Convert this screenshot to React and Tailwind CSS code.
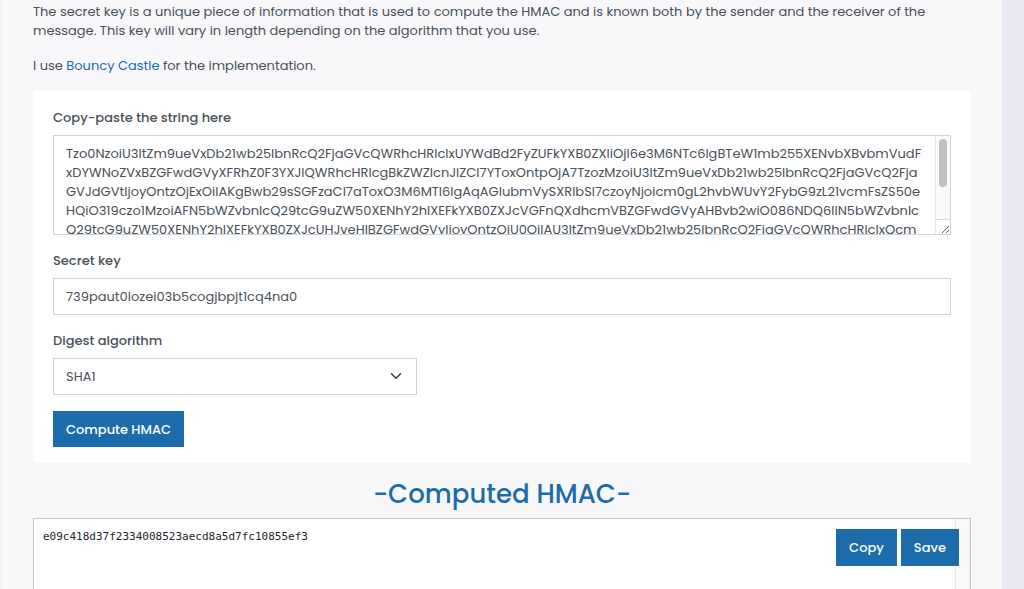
import { useState } from "react";

const MESSAGE = [
  "Tzo0NzoiU3ltZm9ueVxDb21wb25lbnRcQ2FjaGVcQWRhcHRlclxUYWdBd2FyZUFkYXB0ZXIiOjI6e3M6NTc6IgBTeW1mb255XENvbXBvbmVudF",
  "xDYWNoZVxBZGFwdGVyXFRhZ0F3YXJlQWRhcHRlcgBkZWZlcnJlZCI7YToxOntpOjA7TzozMzoiU3ltZm9ueVxDb21wb25lbnRcQ2FjaGVcQ2Fja",
  "GVJdGVtIjoyOntzOjExOiIAKgBwb29sSGFzaCI7aToxO3M6MTI6IgAqAGlubmVySXRlbSI7czoyNjoicm0gL2hvbWUvY2FybG9zL21vcmFsZS50e",
  "HQiO319czo1MzoiAFN5bWZvbnlcQ29tcG9uZW50XENhY2hlXEFkYXB0ZXJcVGFnQXdhcmVBZGFwdGVyAHBvb2wiO086NDQ6IlN5bWZvbnlc",
  "Q29tcG9uZW50XENhY2hlXEFkYXB0ZXJcUHJveHlBZGFwdGVyIjoyOntzOjU0OiIAU3ltZm9ueVxDb21wb25lbnRcQ2FjaGVcQWRhcHRlclxQcm",
].join("\n");

const BUTTON = "bg-[#1c6cab] px-[13px] text-[13px] font-medium text-white";
const LABEL = "mb-2 block text-[13px] leading-[19px] font-medium";
const FIELD = "block border border-[#ced4da] bg-white px-3 text-[13px] leading-[19px] text-[#495057]";

export default function App() {
  const [message, setMessage] = useState(MESSAGE);
  const [secret, setSecret] = useState("739paut0lozei03b5cogjbpjt1cq4na0");

  return (
    <div className="flex h-screen overflow-hidden bg-[#e9e9f3] font-['Poppins','Inter',sans-serif] text-[13px] leading-[19px] text-[#495057]">
      <main className="mr-[22px] min-w-0 flex-1 border-l-2 border-[#f0f0f3] bg-[#f8f8fb] px-[31px] pt-0.5">
        <p>
          The secret key is a unique piece of information that is used to compute the HMAC and is known both by the sender and the receiver of the message. This key will vary in length depending on the algorithm that you use.
        </p>
        <p className="mt-4">
          I use <a href="#bouncy-castle" className="text-[#1c6cab]">Bouncy Castle</a> for the implementation.
        </p>

        <form className="mt-4 bg-white px-5 pt-[17px] pb-4" onSubmit={(e) => e.preventDefault()}>
          <label htmlFor="message" className={LABEL}>Copy-paste the string here</label>
          <div className="relative">
            <textarea
              id="message"
              value={message}
              onChange={(e) => setMessage(e.target.value)}
              className={`${FIELD} h-[100px] w-full resize-none overflow-x-hidden overflow-y-scroll whitespace-pre pt-2 pb-12`}
            />
            <div aria-hidden="true" className="pointer-events-none absolute inset-y-px right-px flex w-[15px] flex-col border-l border-[#e8e8e8] bg-[#fafafa]">
              <div className="flex-1 pt-[3px] pl-[3px]">
                <div className="h-12 w-2 rounded-full bg-[#c1c1c1]" />
              </div>
              <svg className="h-[15px] w-full border-t border-[#dcdcdc] bg-white" viewBox="0 0 14 14" fill="none" stroke="#666666" strokeWidth="1">
                <path d="M6 13l7-7M10 13l3-3" />
              </svg>
            </div>
          </div>
          <label htmlFor="secret" className={`${LABEL} mt-4`}>Secret key</label>
          <input
            id="secret"
            type="text"
            value={secret}
            onChange={(e) => setSecret(e.target.value)}
            className={`${FIELD} h-[37px] w-full`}
          />
          <label htmlFor="digest" className={`${LABEL} mt-4`}>Digest algorithm</label>
          <div className="relative w-[364px] max-w-full">
            <select id="digest" className={`${FIELD} h-[37px] w-full appearance-none`}>
              <option>SHA1</option>
              <option>SHA256</option>
              <option>SHA512</option>
              <option>MD5</option>
            </select>
            <svg className="pointer-events-none absolute top-3 right-[15px] h-3 w-3" viewBox="0 0 16 16" fill="none" stroke="#343a40" strokeWidth="2" strokeLinecap="round" strokeLinejoin="round">
              <path d="M2 5l6 6 6-6" />
            </svg>
          </div>
          <button type="submit" className={`${BUTTON} mt-4 h-9`}>Compute HMAC</button>
        </form>

        <h2 className="mt-4 text-center text-[26px] leading-[31px] font-medium text-[#1c6cab]">-Computed HMAC-</h2>
        <div className="relative mt-2">
          <textarea
            aria-label="Computed HMAC"
            readOnly
            value="e09c418d37f2334008523aecd8a5d7fc10855ef3"
            className="block h-40 w-full resize-none overflow-y-scroll border border-[#c8c8c8] bg-white px-[9px] py-2 font-['DejaVu_Sans_Mono',monospace] text-[11px] leading-5 text-[#212529]"
          />
          <div aria-hidden="true" className="pointer-events-none absolute inset-y-px right-px w-[15px] border-x border-[#e8e8e8] bg-[#fafafa]" />
          <div className="absolute top-[11px] right-3 flex gap-1">
            <button type="button" className={`${BUTTON} h-[37px]`}>Copy</button>
            <button type="button" className={`${BUTTON} h-[37px]`}>Save</button>
          </div>
        </div>
      </main>
    </div>
  );
}
